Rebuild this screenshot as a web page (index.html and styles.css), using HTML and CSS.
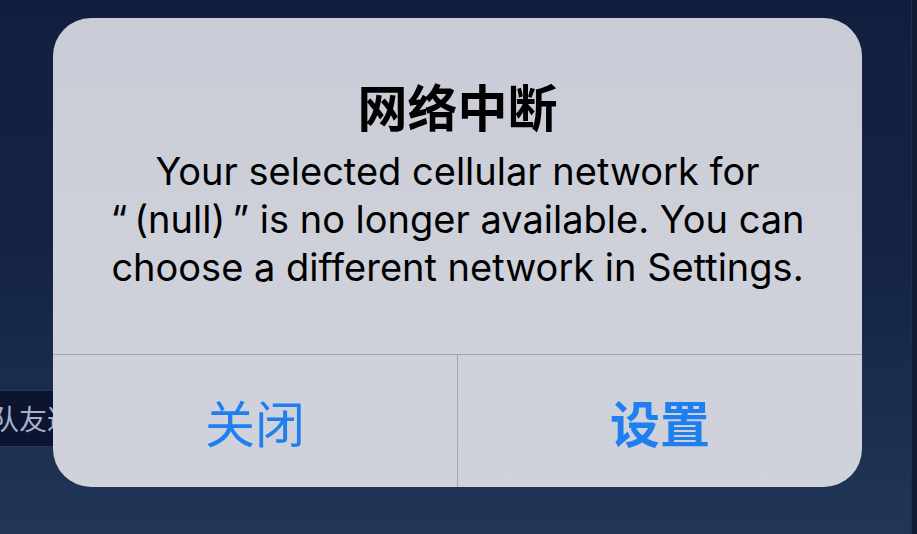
FILE: index.html
```html
<!DOCTYPE html>
<html lang="zh-CN">
<head>
<meta charset="utf-8">
<title>网络中断</title>
<link rel="stylesheet" href="styles.css">
</head>
<body>
<div class="app">
  <div class="app-main">
    <div class="team-btn">队友邀请</div>
  </div>
  <div class="app-edge"></div>
</div>
<div class="overlay">
  <div class="alert">
    <div class="alert-content">
      <div class="alert-title">网络中断</div>
      <div class="alert-message">Your selected cellular network for<br><span class="q-open">“</span>(null)<span class="q-close">”</span> is no longer available. You can<br>choose a different network in Settings.</div>
    </div>
    <div class="alert-actions">
      <div class="alert-btn">关闭</div>
      <div class="alert-btn alert-btn-bold">设置</div>
    </div>
  </div>
</div>
</body>
</html>
```
FILE: styles.css
```css
html, body {
  margin: 0;
  padding: 0;
  width: 917px;
  height: 534px;
  overflow: hidden;
}
body {
  font-family: "Inter", "Noto Sans CJK SC", sans-serif;
  background: linear-gradient(180deg, #121e3e 0%, #152443 50%, #213657 100%);
  position: relative;
}
.app {
  display: flex;
  height: 534px;
}
.app-main {
  flex: 1;
  padding-top: 390px;
}
.app-edge {
  width: 5px;
  background: #101a33;
  border-left: 1px solid #1f2d4d;
}
.team-btn {
  display: inline-block;
  margin-left: -22px;
  height: 55px;
  line-height: 55px;
  padding: 0 12px;
  background: #0c1430;
  border: 1px solid #26355a;
  border-radius: 4px;
  color: #a9b2cc;
  font-size: 28px;
  font-family: "Noto Sans CJK SC", sans-serif;
}
.overlay {
  position: absolute;
  left: 0;
  top: 0;
  width: 917px;
  height: 534px;
  display: flex;
  justify-content: center;
  padding-top: 18px;
  box-sizing: border-box;
}
.alert {
  width: 809px;
  height: 469px;
  margin-left: -2px;
  border-radius: 38px;
  background: linear-gradient(180deg, #c9ccd6 0%, #ced1da 50%, #cfd2da 100%);
  display: flex;
  flex-direction: column;
  overflow: hidden;
}
.alert-content {
  height: 336px;
  box-sizing: border-box;
  padding: 57px 20px 0;
  text-align: center;
}
.alert-title {
  font-family: "Noto Sans CJK SC", sans-serif;
  font-weight: 700;
  font-size: 50px;
  line-height: 60px;
  color: #000;
}
.alert-message {
  margin-top: 12px;
  font-size: 38px;
  line-height: 48px;
  color: #000;
}
.q-open {
  margin-right: 7px;
}
.q-close {
  margin-left: 7px;
}
.alert-actions {
  flex: 1;
  display: flex;
  border-top: 1px solid #a2a5ae;
}
.alert-btn {
  flex: 1;
  display: flex;
  align-items: center;
  justify-content: center;
  font-family: "Noto Sans CJK SC", sans-serif;
  font-size: 50px;
  color: #1f7ef0;
}
.alert-btn + .alert-btn {
  border-left: 1px solid #a2a5ae;
}
.alert-btn-bold {
  font-weight: 700;
}
```
